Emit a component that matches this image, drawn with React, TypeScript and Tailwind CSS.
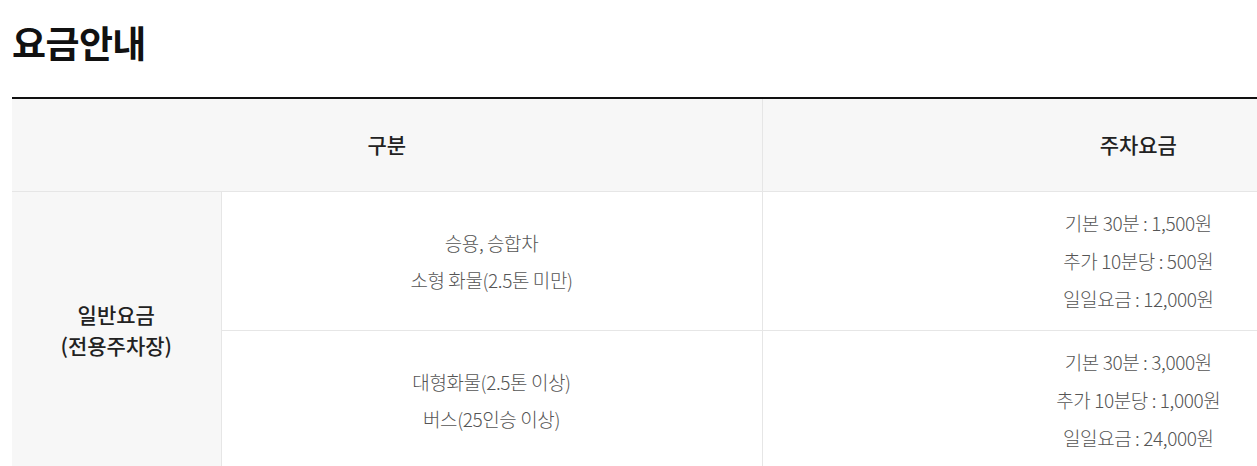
import React from "react";

const rows = [
    {
        kinds: ["승용, 승합차", "소형 화물(2.5톤 미만)"],
        fees: ["기본 30분 : 1,500원", "추가 10분당 : 500원", "일일요금 : 12,000원"],
    },
    {
        kinds: ["대형화물(2.5톤 이상)", "버스(25인승 이상)"],
        fees: ["기본 30분 : 3,000원", "추가 10분당 : 1,000원", "일일요금 : 24,000원"],
    },
];

export default function App() {
    return (
        <div
            className="w-[1257px] h-[466px] overflow-hidden bg-white"
            style={{ fontFamily: '"Noto Sans CJK KR", "Noto Sans", sans-serif' }}
        >
            <div className="pl-3 pt-[18px]">
                <h2 className="text-[37px] leading-[48px] font-bold text-[#111] tracking-[-0.6px]">요금안내</h2>

                <table className="mt-[31px] w-[1502px] table-fixed border-collapse border-t-2 border-[#111]">
                    <colgroup>
                        <col className="w-[209px]" />
                        <col className="w-[541px]" />
                        <col className="w-[752px]" />
                    </colgroup>
                    <thead>
                        <tr className="bg-[#f7f7f7] h-[93px] border-b border-[#e6e6e6]">
                            <th colSpan={2} className="text-[21px] font-medium text-[#222] border-r border-[#e6e6e6]">
                                구분
                            </th>
                            <th className="text-[21px] font-medium text-[#222]">주차요금</th>
                        </tr>
                    </thead>
                    <tbody>
                        {rows.map((row, i) => (
                            <tr key={i} className="border-b border-[#e6e6e6]">
                                {i === 0 && (
                                    <td
                                        rowSpan={2}
                                        className="bg-[#f7f7f7] text-center text-[21px] leading-[31px] font-medium text-[#222] border-r border-[#e6e6e6] align-middle"
                                    >
                                        일반요금
                                        <br />
                                        (전용주차장)
                                    </td>
                                )}
                                <td className="text-center text-[19px] leading-[37px] font-light text-[#555] tracking-[-0.4px] border-r border-[#e6e6e6] py-[12px]">
                                    {row.kinds.map((k) => (
                                        <div key={k}>{k}</div>
                                    ))}
                                </td>
                                <td className="text-center text-[19px] leading-[38px] font-light text-[#555] tracking-[-0.4px] py-[12px]">
                                    {row.fees.map((f) => (
                                        <div key={f}>{f}</div>
                                    ))}
                                </td>
                            </tr>
                        ))}
                    </tbody>
                </table>
            </div>
        </div>
    );
}
